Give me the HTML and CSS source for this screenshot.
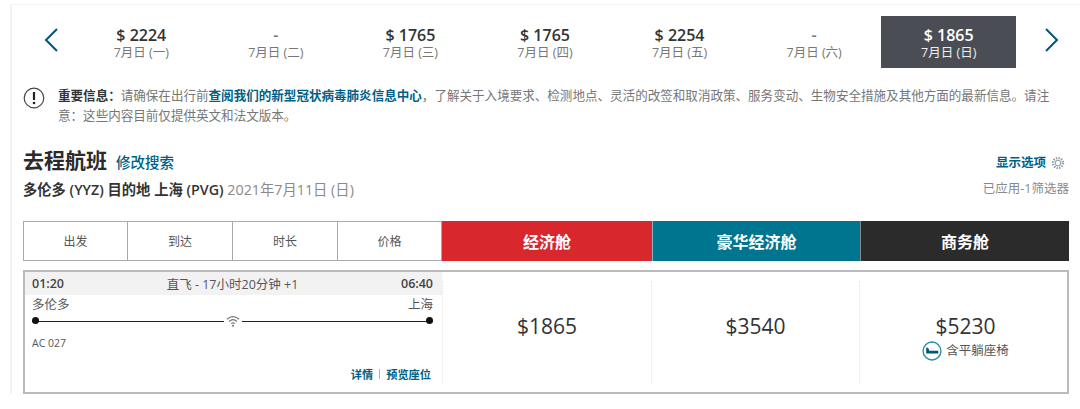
FILE: index.html
```html
<!DOCTYPE html>
<html lang="zh-CN">
<head>
  <meta charset="UTF-8" />
  <title>去程航班</title>
  <link rel="stylesheet" href="styles.css">
</head>
<body>
  <div class="panel">
    <div class="date-strip">
      <button class="arrow">
        <svg width="14" height="24" viewBox="0 0 14 24"><path d="M13 1 L2 12 L13 23" fill="none" stroke="#00567a" stroke-width="2"/></svg>
      </button>
      <div class="dates">
        <div class="date"><div class="date-price">$ 2224</div><div class="date-day">7月日 (一)</div></div>
        <div class="date"><div class="date-price none">-</div><div class="date-day">7月日 (二)</div></div>
        <div class="date"><div class="date-price">$ 1765</div><div class="date-day">7月日 (三)</div></div>
        <div class="date"><div class="date-price">$ 1765</div><div class="date-day">7月日 (四)</div></div>
        <div class="date"><div class="date-price">$ 2254</div><div class="date-day">7月日 (五)</div></div>
        <div class="date"><div class="date-price none">-</div><div class="date-day">7月日 (六)</div></div>
        <div class="date active"><div class="date-price">$ 1865</div><div class="date-day">7月日 (日)</div></div>
      </div>
      <button class="arrow">
        <svg width="14" height="24" viewBox="0 0 14 24"><path d="M1 1 L12 12 L1 23" fill="none" stroke="#00567a" stroke-width="2"/></svg>
      </button>
    </div>

    <div class="notice">
      <svg class="notice-icon" width="22" height="22" viewBox="0 0 22 22">
        <circle cx="11" cy="11" r="9.8" fill="none" stroke="#444" stroke-width="1.2"/>
        <path d="M11 5 V13" stroke="#222" stroke-width="2.2"/>
        <circle cx="11" cy="16" r="1.3" fill="#222"/>
      </svg>
      <p><b>重要信息：</b>请确保在出行前<a href="#">查阅我们的新型冠状病毒肺炎信息中心</a>，了解关于入境要求、检测地点、灵活的改签和取消政策、服务变动、生物安全措施及其他方面的最新信息。请注<br>意：这些内容目前仅提供英文和法文版本。</p>
    </div>

    <div class="heading">
      <div>
        <div class="title-row">
          <h1>去程航班</h1>
          <a class="modify" href="#">修改搜索</a>
        </div>
        <div class="route"><b>多伦多 (YYZ) 目的地 上海 (PVG)</b> 2021年7月11日 (日)</div>
      </div>
      <div class="options">
        <div class="options-link">
          <a href="#">显示选项</a>
          <svg width="14" height="14" viewBox="0 0 14 14" fill="none" stroke="#8a9aa3">
            <circle cx="7" cy="7" r="2.8"/>
            <circle cx="7" cy="7" r="5" stroke-width="2.4" stroke-dasharray="1.3 1.3"/>
          </svg>
        </div>
        <div class="filters">已应用-1筛选器</div>
      </div>
    </div>

    <div class="table-head">
      <div class="sorts">
        <div class="sort">出发</div>
        <div class="sort">到达</div>
        <div class="sort">时长</div>
        <div class="sort">价格</div>
      </div>
      <div class="cabin economy">经济舱</div>
      <div class="cabin premium">豪华经济舱</div>
      <div class="cabin business">商务舱</div>
    </div>

    <div class="flight">
      <div class="flight-info">
        <div class="times">
          <span class="time">01:20</span>
          <span>直飞 - 17小时20分钟 +1</span>
          <span class="time">06:40</span>
        </div>
        <div class="cities"><span>多伦多</span><span>上海</span></div>
        <div class="line">
          <svg width="16" height="14" viewBox="0 0 18 16" fill="none" stroke="#777" stroke-width="1.4">
            <path d="M2 6 Q9 0 16 6"/>
            <path d="M4.5 8.5 Q9 4.5 13.5 8.5"/>
            <path d="M7 11 Q9 9.5 11 11"/>
            <circle cx="9" cy="13.5" r="1.2" fill="#777" stroke="none"/>
          </svg>
        </div>
        <div class="flight-no">AC 027</div>
        <div class="flight-links"><a href="#">详情</a><i></i><a href="#">预览座位</a></div>
      </div>
      <div class="fare">$1865</div>
      <div class="fare">$3540</div>
      <div class="fare">
        $5230
        <div class="fare-note">
          <svg width="20" height="20" viewBox="0 0 19 19" fill="none">
            <circle cx="9.5" cy="9.5" r="8.5" stroke="#2b8fa6" stroke-width="1.3"/>
            <path d="M4 6.5 V11.8 H15.5 V9.2 H7 L5.8 6.5 Z" fill="#00567a"/>
          </svg>
          含平躺座椅
        </div>
      </div>
    </div>
  </div>
</body>
</html>
```

FILE: styles.css
```css
* {
  box-sizing: border-box;
}

body {
  margin: 0;
  background: #fff;
  font-family: "Open Sans", "Noto Sans CJK SC", sans-serif;
  color: #333;
  height: 409px;
  overflow: hidden;
  text-spacing-trim: space-all;
}

a {
  color: #005f85;
  text-decoration: none;
}

.panel {
  margin: 4px 0 0 10px;
  padding: 11px 11px 0 11px;
  border-top: 1px solid #f2f2f2;
  border-left: 2px solid #f2f2f2;
}

.date-strip {
  display: flex;
  align-items: center;
  height: 52px;
}

.arrow {
  width: 51px;
  height: 100%;
  padding: 0 0 4px 21px;
  background: none;
  border: none;
  display: flex;
  align-items: center;
  justify-content: flex-start;
}

.arrow:last-child {
  width: 53px;
  padding-left: 29px;
}

.dates {
  display: grid;
  grid-template-columns: repeat(7, 1fr);
  width: 942px;
  height: 100%;
}

.date {
  text-align: center;
  padding-top: 10px;
  color: #777;
}

.date-price {
  font-size: 16px;
  font-weight: 600;
  line-height: 19px;
  color: #333;
}

.date-price.none {
  color: #777;
}

.date-day {
  font-size: 12.5px;
  line-height: 15px;
}

.date.active {
  background: #4a4e54;
  color: #eee;
}

.date.active .date-price {
  color: #fff;
}

.notice {
  display: flex;
  gap: 13px;
  margin-top: 18px;
  font-size: 12.56px;
  line-height: 20px;
  color: #767676;
}

.notice-icon {
  flex: none;
  margin-top: 1px;
}

.notice p {
  margin: 0;
  white-space: nowrap;
}

.notice b {
  color: #333;
  font-weight: 600;
}

.notice a {
  font-weight: 600;
}

.heading {
  display: flex;
  justify-content: space-between;
  margin-top: 20px;
}

.title-row {
  display: flex;
  align-items: baseline;
  gap: 9px;
}

h1 {
  margin: 0;
  font-size: 21px;
  line-height: 28px;
  font-weight: 700;
  color: #2b2b2b;
}

.modify {
  font-size: 14.5px;
  font-weight: 500;
}

.route {
  margin-top: 4px;
  font-size: 14.3px;
  line-height: 24px;
  color: #8a8a8a;
}

.route b {
  color: #333;
  font-weight: 600;
}

.options {
  text-align: right;
  padding-top: 8px;
}

.options-link {
  display: flex;
  justify-content: flex-end;
  align-items: center;
  gap: 5px;
  padding-right: 4px;
  font-size: 12.5px;
  font-weight: 700;
  line-height: 18px;
}

.filters {
  margin-top: 8px;
  font-size: 12.5px;
  line-height: 18px;
  color: #8a8a8a;
}

.table-head {
  display: grid;
  grid-template-columns: 419px 210px 208px 209px;
  height: 40px;
  margin-top: 19px;
}

.sorts {
  display: grid;
  grid-template-columns: 103px 105px 105px 1fr;
  border: 1px solid #aaa;
}

.sort {
  display: flex;
  align-items: center;
  justify-content: center;
  font-size: 12px;
  color: #555;
  border-left: 1px solid #aaa;
}

.sort:first-child {
  border-left: none;
}

.cabin {
  display: flex;
  align-items: center;
  justify-content: center;
  font-size: 16px;
  font-weight: 700;
  color: #fff;
}

.economy {
  background: #d9272e;
}

.premium {
  background: #00758f;
  border-left: 1px solid #7fb6c4;
}

.business {
  background: #2b2b2b;
  border-left: 1px solid #888;
}

.flight {
  display: grid;
  grid-template-columns: 417px 209px 208px 1fr;
  width: 1046px;
  height: 124px;
  margin-top: 9px;
  border: 2px solid #bbb;
}

.flight-info {
  display: flex;
  flex-direction: column;
  font-size: 12.5px;
  color: #555;
}

.times {
  display: flex;
  justify-content: space-between;
  align-items: center;
  height: 23px;
  padding: 0 9px 0 7px;
  background: #f2f2f2;
}

.time {
  font-weight: 600;
  font-size: 12.5px;
  color: #444;
}

.cities {
  display: flex;
  justify-content: space-between;
  padding: 0 9px 0 7px;
  margin-top: 1px;
  line-height: 17px;
}

.line {
  position: relative;
  height: 16px;
  margin: 0 9px 0 7px;
  display: flex;
  justify-content: center;
  align-items: center;
  background: linear-gradient(#222, #222) center / 100% 1px no-repeat;
}

.line::before,
.line::after {
  content: "";
  position: absolute;
  top: 4px;
  width: 7px;
  height: 7px;
  border-radius: 50%;
  background: #111;
}

.line::before {
  left: 0;
}

.line::after {
  right: 0;
}

.line svg {
  box-sizing: content-box;
  background: #fff;
  padding: 1px;
}

.flight-no {
  margin: 6px 0 0 7px;
  font-size: 10.5px;
  line-height: 16px;
}

.flight-links {
  display: flex;
  justify-content: flex-end;
  align-items: center;
  gap: 6px;
  margin-top: 15px;
  padding-right: 11px;
  font-size: 11.2px;
  font-weight: 700;
}

.flight-links i {
  width: 1px;
  height: 10px;
  background: #e0a0a0;
}

.fare {
  display: flex;
  flex-direction: column;
  align-items: center;
  justify-content: center;
  margin: 9px 0;
  padding-bottom: 12px;
  font-size: 21px;
  line-height: 26px;
  color: #333;
  border-left: 1px dotted #e4e4e4;
}

.fare:last-child {
  padding: 9px 0 0 4px;
}

.fare-note {
  display: flex;
  align-items: center;
  gap: 4px;
  margin-top: 2px;
  font-size: 12.5px;
  line-height: 20px;
  color: #555;
}
```
